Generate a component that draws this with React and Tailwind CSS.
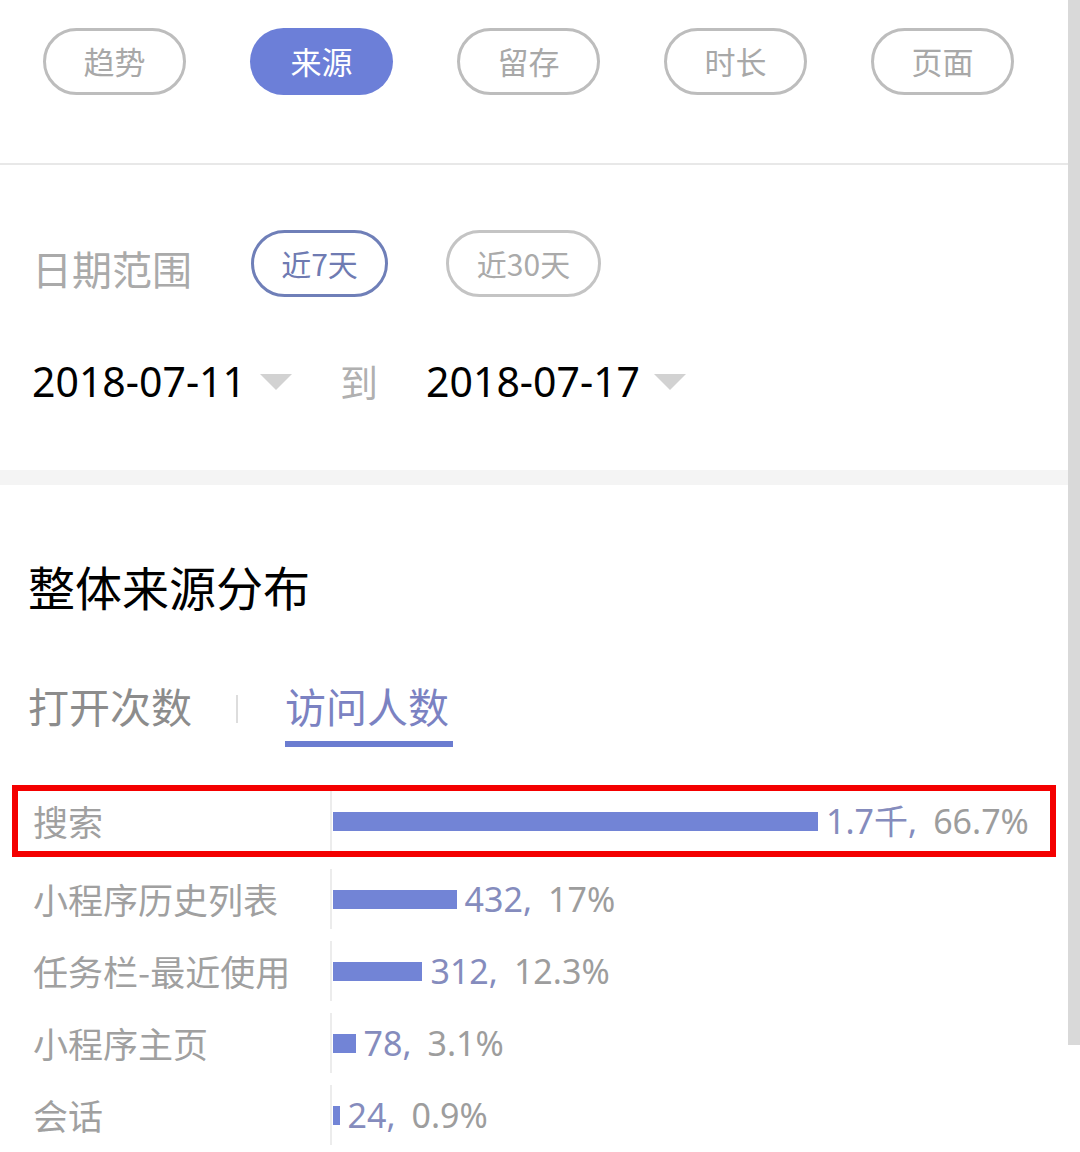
import React from "react";

const cjk = { fontFamily: '"Noto Sans CJK SC", "Noto Sans", sans-serif' };
const num = { fontFamily: '"Noto Sans", "Noto Sans CJK SC", sans-serif' };

const tabs = ["趋势", "来源", "留存", "时长", "页面"];

const rows = [
  { label: "搜索", value: "1.7千", pct: 66.7, hl: true },
  { label: "小程序历史列表", value: "432", pct: 17 },
  { label: "任务栏-最近使用", value: "312", pct: 12.3 },
  { label: "小程序主页", value: "78", pct: 3.1 },
  { label: "会话", value: "24", pct: 0.9 },
];

const Caret = () => (
  <svg width="32" height="16" viewBox="0 0 32 16" className="ml-[14px] mt-[2px]">
    <path d="M0 0 L32 0 L16 16 Z" fill="#d2d2d2" />
  </svg>
);

export default function App() {
  return (
    <div className="w-[1080px] h-[1152px] bg-white flex overflow-hidden" style={cjk}>
      <div className="w-[1068px] flex flex-col">
        {/* top tabs */}
        <div className="h-[165px] flex gap-[64px] pl-[43px] pt-[28px] border-b-2 border-[#e8e8e8]">
          {tabs.map((t) => (
            <div
              key={t}
              className={
                t === "来源"
                  ? "w-[143px] h-[67px] rounded-full bg-[#6c7fd8] text-white text-[31px] flex items-center justify-center"
                  : "w-[143px] h-[67px] rounded-full border-[3px] border-[#bdbdbd] text-[#a8a8a8] text-[31px] flex items-center justify-center"
              }
            >
              {t}
            </div>
          ))}
        </div>

        {/* date range */}
        <div className="h-[305px] bg-white flex flex-col pl-[32px]">
          <div className="flex items-center mt-[65px] h-[67px]">
            <span className="text-[40px] text-[#aaaaaa] mt-[8px]">日期范围</span>
            <div className="ml-[59px] w-[137px] h-[67px] rounded-full border-[3px] border-[#6f7fb8] text-[#6f7bb2] text-[30px] flex items-center justify-center">
              近7天
            </div>
            <div className="ml-[58px] w-[155px] h-[67px] rounded-full border-[3px] border-[#c4c4c4] text-[#aaaaaa] text-[30px] flex items-center justify-center">
              近30天
            </div>
          </div>
          <div className="flex items-center mt-[56px] h-[56px]">
            <span className="text-[41px] text-black leading-none" style={num}>2018-07-11</span>
            <Caret />
            <span className="ml-[48px] text-[38px] text-[#b0b0b0] leading-none">到</span>
            <span className="ml-[48px] text-[41px] text-black leading-none" style={num}>2018-07-17</span>
            <Caret />
          </div>
        </div>

        <div className="h-[15px] bg-[#f4f4f4]" />

        {/* distribution */}
        <div className="flex flex-col">
          <div className="pl-[28px] mt-[77px] text-[47px] text-black leading-none">整体来源分布</div>
          <div className="flex items-start pl-[28px] mt-[76px]">
            <span className="text-[41px] text-[#8c8c8c] leading-none">打开次数</span>
            <span className="ml-[44px] mt-[10px] w-[2px] h-[28px] bg-[#dddddd]" />
            <div className="ml-[47px] flex flex-col">
              <span className="text-[41px] text-[#7b82c2] leading-none">访问人数</span>
              <span className="mt-[15px] w-[168px] h-[6px] bg-[#6b7cd0]" />
            </div>
          </div>

          <div className="flex flex-col px-[12px] mt-[38px]">
            {rows.map((r, i) => (
              <div
                key={r.label}
                className={
                  r.hl
                    ? "h-[72px] border-[6px] border-[#f40000] flex items-stretch"
                    : "h-[72px] border-[6px] border-transparent flex items-stretch"
                }
                style={i === 1 ? { marginTop: 6 } : undefined}
              >
                <div className="w-[312px] pl-[15px] flex items-center text-[35px] text-[#a0a0a0] whitespace-nowrap">{r.label}</div>
                <div className="flex-1 border-l-2 border-[#ececec] flex items-center pl-[1px]">
                  <div className="h-[19px] bg-[#7284d6]" style={{ width: (r.pct / 66.7) * 485 }} />
                  <span className="ml-[8px] text-[34px] leading-none whitespace-nowrap flex" style={num}>
                    <span className="text-[#858cbd]">{r.value},</span>
                    <span className="ml-[16px] text-[#9d9d9d]">{r.pct}%</span>
                  </span>
                </div>
              </div>
            ))}
          </div>
        </div>
      </div>
      <div className="w-[12px] h-[1045px] bg-[#d9d9d9]" />
    </div>
  );
}
